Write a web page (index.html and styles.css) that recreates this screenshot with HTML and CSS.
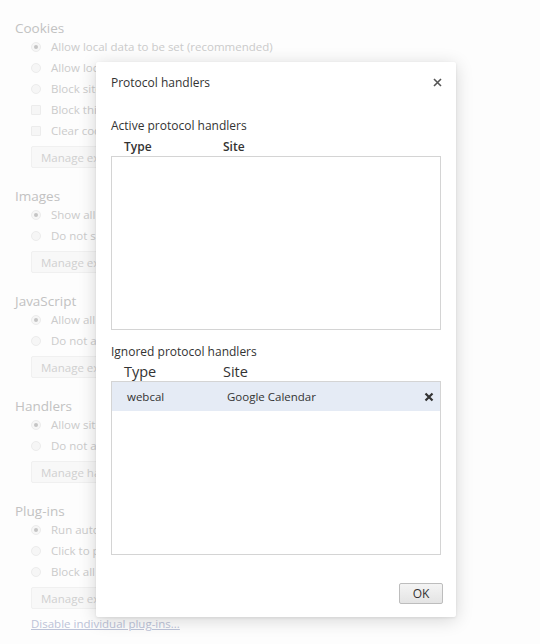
FILE: index.html
```html
<!DOCTYPE html>
<html>
<head>
<meta charset="utf-8">
<link rel="stylesheet" href="styles.css">
</head>
<body>
<div class="settings">
  <section class="group">
    <h3 class="group-title">Cookies</h3>
    <div class="opt"><span class="radio on"></span>Allow local data to be set (recommended)</div>
    <div class="opt"><span class="radio"></span>Allow local data to be set for current session only</div>
    <div class="opt"><span class="radio"></span>Block sites from setting any data</div>
    <div class="opt"><span class="check"></span>Block third-party cookies and site data</div>
    <div class="opt"><span class="check"></span>Clear cookies and other site data when I close my browser</div>
    <button class="ghost-btn">Manage exceptions...</button>
  </section>
  <section class="group">
    <h3 class="group-title">Images</h3>
    <div class="opt"><span class="radio on"></span>Show all images (recommended)</div>
    <div class="opt"><span class="radio"></span>Do not show any images</div>
    <button class="ghost-btn">Manage exceptions...</button>
  </section>
  <section class="group">
    <h3 class="group-title">JavaScript</h3>
    <div class="opt"><span class="radio on"></span>Allow all sites to run JavaScript (recommended)</div>
    <div class="opt"><span class="radio"></span>Do not allow any site to run JavaScript</div>
    <button class="ghost-btn">Manage exceptions...</button>
  </section>
  <section class="group">
    <h3 class="group-title">Handlers</h3>
    <div class="opt"><span class="radio on"></span>Allow sites to ask to become default handlers for protocols</div>
    <div class="opt"><span class="radio"></span>Do not allow any site to handle protocols</div>
    <button class="ghost-btn">Manage handlers...</button>
  </section>
  <section class="group">
    <h3 class="group-title">Plug-ins</h3>
    <div class="opt"><span class="radio on"></span>Run automatically (recommended)</div>
    <div class="opt"><span class="radio"></span>Click to play</div>
    <div class="opt"><span class="radio"></span>Block all</div>
    <button class="ghost-btn">Manage exceptions...</button>
    <a class="ghost-link" href="#">Disable individual plug-ins...</a>
  </section>
</div>

<div class="dialog">
  <div class="dialog-head">
    <span class="dialog-title">Protocol handlers</span>
    <svg class="close" width="9" height="9" viewBox="0 0 9 9"><path d="M1 1L8 8M8 1L1 8" stroke="#555" stroke-width="1.6"/></svg>
  </div>
  <div class="dialog-body">
    <div class="list-title">Active protocol handlers</div>
    <div class="list-head bold"><span class="col-type">Type</span><span>Site</span></div>
    <div class="list"></div>

    <div class="list-title second">Ignored protocol handlers</div>
    <div class="list-head big"><span class="col-type">Type</span><span>Site</span></div>
    <div class="list">
      <div class="row">
        <span class="cell-type">webcal</span>
        <span class="cell-site">Google Calendar</span>
        <svg class="row-x" width="10" height="10" viewBox="0 0 10 10"><path d="M1.5 1.5L8.5 8.5M8.5 1.5L1.5 8.5" stroke="#333" stroke-width="2.2"/></svg>
      </div>
    </div>
  </div>
  <div class="dialog-foot">
    <button class="ok">OK</button>
  </div>
</div>
</body>
</html>
```

FILE: styles.css
```css
html, body {
  margin: 0;
  padding: 0;
}
body {
  background: #fdfdfd;
  font-family: "Open Sans", "Noto Sans", sans-serif;
  font-size: 12px;
  width: 540px;
  height: 644px;
  overflow: hidden;
  position: relative;
}
.settings {
  padding: 20px 0 0 15px;
  color: #cbcbcb;
}
.group {
  margin-bottom: 20px;
}
.group-title {
  margin: 0;
  font-weight: normal;
  font-size: 13.5px;
  line-height: 16px;
  color: #c2c2c2;
}
.opt {
  display: flex;
  align-items: center;
  height: 21px;
  padding-left: 16px;
  white-space: nowrap;
  font-size: 11.5px;
}
.radio, .check {
  width: 10px;
  height: 10px;
  margin-right: 10px;
  border: 1px solid #ececec;
  background: #f6f6f6;
  box-sizing: border-box;
  flex: none;
}
.radio {
  border-radius: 50%;
  position: relative;
}
.radio.on::after {
  content: "";
  position: absolute;
  left: 2px;
  top: 2px;
  width: 4px;
  height: 4px;
  border-radius: 50%;
  background: #c4c4c4;
}
.check {
  border-radius: 1px;
}
.ghost-btn {
  display: block;
  margin: 5px 0 0 16px;
  height: 22px;
  padding: 0 9px;
  border: 1px solid #f0f0f0;
  border-radius: 2px;
  background: #f8f8f8;
  color: #d0d0d0;
  font-family: inherit;
  font-size: 11.5px;
}
.ghost-link {
  display: block;
  margin: 7px 0 0 16px;
  line-height: 16px;
  color: #bcc3d8;
  font-size: 11.5px;
}

.dialog {
  position: absolute;
  left: 96px;
  top: 62px;
  width: 360px;
  height: 555px;
  background: #fff;
  border-radius: 2px;
  box-shadow: 0 3px 18px rgba(0, 0, 0, 0.16), 0 1px 3px rgba(0, 0, 0, 0.08);
  display: flex;
  flex-direction: column;
  color: #333;
}
.dialog-head {
  display: flex;
  align-items: center;
  justify-content: space-between;
  height: 40px;
  padding: 0 15px 0 15px;
}
.dialog-title {
  font-size: 12px;
}
.close {
  margin-right: -1px;
}
.dialog-body {
  padding: 0 15px;
  flex: 1;
}
.list-title {
  margin-top: 15px;
  line-height: 18px;
  font-size: 12px;
}
.list-title.second {
  margin-top: 13px;
}
.list-head {
  display: flex;
  padding-left: 13px;
  height: 20px;
  align-items: center;
}
.list-head.bold {
  font-weight: 600;
  font-size: 12px;
  height: 21px;
  padding-top: 2px;
  box-sizing: border-box;
}
.list-head.big {
  font-size: 14.5px;
  height: 20px;
}
.col-type {
  width: 99px;
}
.list {
  height: 174px;
  border: 1px solid #d4d4d4;
  box-sizing: border-box;
}
.row {
  display: flex;
  align-items: center;
  height: 29px;
  background: #e5ebf5;
  font-size: 11.5px;
  padding-left: 15px;
}
.cell-type {
  width: 100px;
}
.cell-site {
  flex: 1;
}
.row-x {
  margin-right: 6px;
}
.dialog-foot {
  display: flex;
  justify-content: flex-end;
  padding: 0 13px 13px 0;
}
.ok {
  width: 44px;
  height: 21px;
  padding: 0;
  border: 1px solid #bdbdbd;
  border-radius: 2px;
  background: linear-gradient(#f4f4f4, #e4e4e4);
  font-family: inherit;
  font-size: 12px;
  color: #333;
}
```
